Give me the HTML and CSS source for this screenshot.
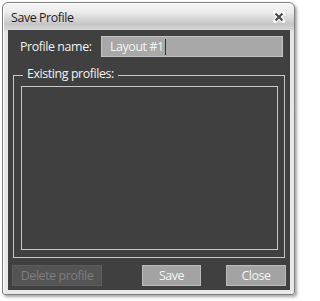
FILE: index.html
```html
<!DOCTYPE html>
<html>
<head>
<meta charset="utf-8">
<link rel="stylesheet" href="styles.css">
</head>
<body>
<div class="window">
  <div class="titlebar">
    <span class="title">Save Profile</span>
    <svg class="close" width="12" height="12" viewBox="0 0 12 12">
      <path d="M2 2 L10 10 M10 2 L2 10" stroke="#ffffff" stroke-width="4.2" stroke-linecap="square"/>
      <path d="M2.5 2.5 L9.5 9.5 M9.5 2.5 L2.5 9.5" stroke="#4a4a4a" stroke-width="2.2"/>
    </svg>
  </div>
  <div class="client">
    <div class="name-row">
      <label class="label">Profile name:</label>
      <div class="input"><span class="value">Layout #1</span><span class="caret"></span></div>
    </div>
    <fieldset class="group">
      <legend class="legend">Existing profiles:</legend>
      <div class="list"></div>
    </fieldset>
    <div class="buttons">
      <button class="btn btn-delete">Delete profile</button>
      <button class="btn btn-save">Save</button>
      <button class="btn btn-close">Close</button>
    </div>
  </div>
</div>
</body>
</html>
```

FILE: styles.css
```css
html, body {
  margin: 0;
  padding: 0;
  background: #ffffff;
  width: 301px;
  height: 301px;
  overflow: hidden;
}
.window {
  box-sizing: border-box;
  margin: 2px 0 0 2px;
  width: 293px;
  height: 293px;
  border: 1px solid #7e7e7e;
  border-radius: 6px 6px 3px 3px;
  background: linear-gradient(to bottom, #f6f6f6 0px, #ececec 9px, #c6c6c6 21px, #d4d4d4 26px, #e6e6e6 29px, #e9e9e9 100%);
  box-shadow: 2px 2px 3px rgba(0,0,0,0.35), inset 1px 1px 0 #ffffff;
  display: flex;
  flex-direction: column;
  font-family: "Open Sans", "Noto Sans", sans-serif;
  font-size: 12.4px;
  letter-spacing: -0.4px;
}
.titlebar {
  height: 27px;
  display: flex;
  align-items: center;
  justify-content: space-between;
  padding: 0 9px 0 8px;
}
.title {
  color: #1c1c1c;
  margin-top: 1px;
}
.close {
  display: block;
  margin-top: 1px;
}
.client {
  flex: 1;
  margin: 0 4px 4px 5px;
  background: #404040;
  padding: 6px 4px 4px 4px;
  display: flex;
  flex-direction: column;
}
.name-row {
  display: flex;
  align-items: center;
  height: 21px;
  padding: 0 3px 0 8px;
}
.label {
  width: 81px;
  color: #f2f2f2;
}
.input {
  box-sizing: border-box;
  flex: 1;
  height: 21px;
  background: #a8a8a8;
  border: 1px solid #c2c2c2;
  display: flex;
  align-items: center;
  padding-left: 8px;
  color: #f4f4f4;
}
.caret {
  display: block;
  width: 1px;
  height: 16px;
  background: #333333;
  margin-left: 1px;
}
.group {
  flex: 1;
  margin: 9px 1px 0 1px;
  padding: 1px 6px 7px 7px;
  border: 1px solid #c8c8c8;
  display: flex;
  flex-direction: column;
  min-height: 0;
}
.legend {
  padding: 0 4px 3px 4px;
  margin-left: 2px;
  color: #f2f2f2;
  line-height: 16px;
}
.list {
  flex: 1;
  border: 1px solid #c8c8c8;
}
.buttons {
  display: flex;
  margin-top: 7px;
  height: 21px;
}
.btn {
  box-sizing: border-box;
  height: 21px;
  padding: 0;
  border: 1px solid #bcbcbc;
  background: #a3a3a3;
  color: #f6f6f6;
  font-family: inherit;
  font-size: 12.4px;
  letter-spacing: -0.4px;
}
.btn-delete {
  width: 90px;
  background: #545454;
  border-color: #5c5c5c;
  color: #7e7e7e;
}
.btn-save {
  width: 59px;
  margin-left: auto;
}
.btn-close {
  width: 60px;
  margin-left: 25px;
}
```
